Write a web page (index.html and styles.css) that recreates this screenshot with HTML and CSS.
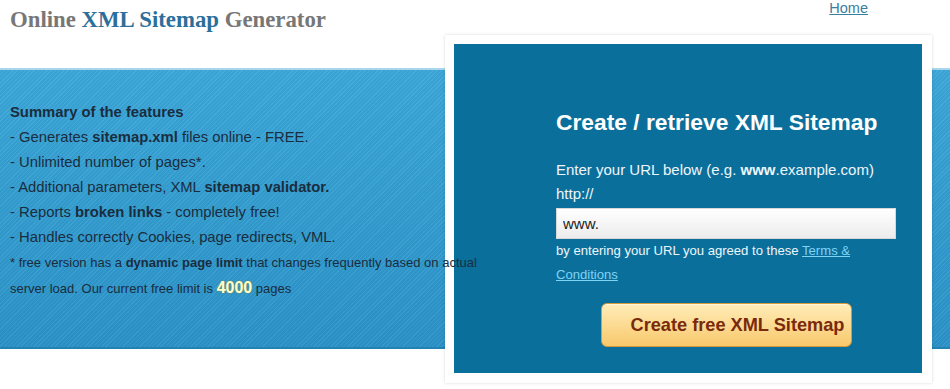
FILE: index.html
```html
<!DOCTYPE html>
<html lang="en">
<head>
    <meta charset="UTF-8">
    <meta name="viewport" content="width=device-width, initial-scale=1.0">
    <title>Online XML Sitemap Generator</title>
    <link rel="stylesheet" href="styles.css">
</head>
<body>
    <div class="header">
        <div class="logo">Online <span class="blue">XML Sitemap</span> Generator</div>
        <a class="home-link" href="#">Home</a>
    </div>
    <div class="band">
        <div class="features">
            <div class="line"><b>Summary of the features</b></div>
            <div class="line">- Generates <b>sitemap.xml</b> files online - FREE.</div>
            <div class="line">- Unlimited number of pages*.</div>
            <div class="line">- Additional parameters, XML <b>sitemap validator.</b></div>
            <div class="line">- Reports <b>broken links</b> - completely free!</div>
            <div class="line">- Handles correctly Cookies, page redirects, VML.</div>
            <div class="note">* free version has a <b>dynamic page limit</b> that changes frequently based on actual server load. Our current free limit is <span class="limit">4000</span> pages</div>
        </div>
        <div class="card">
            <div class="card-inner">
                <h2>Create / retrieve XML Sitemap</h2>
                <div class="line">Enter your URL below (e.g. <b>www</b>.example.com)</div>
                <div class="line">http://</div>
                <input type="text" id="url" value="www.">
                <div class="terms">by entering your URL you agreed to these <a href="#">Terms &amp; Conditions</a></div>
                <div class="btn-row">
                    <button id="start-button">Create free XML Sitemap</button>
                </div>
            </div>
        </div>
    </div>
</body>
</html>
```

FILE: styles.css
```css
body {
    margin: 0;
    min-height: 389px;
    font-family: "Liberation Sans", Arial, sans-serif;
    background: #fff;
}
.header {
    height: 68px;
    display: flex;
    justify-content: space-between;
    align-items: flex-start;
}
.logo {
    font-family: "Liberation Serif", "Times New Roman", serif;
    font-weight: bold;
    font-size: 22.8px;
    color: #777;
    padding: 7px 0 0 10px;
}
.logo .blue {
    color: #2c6f9a;
}
.home-link {
    font-size: 14.5px;
    line-height: 16px;
    color: #3a7ea3;
    margin: 0 82px 0 0;
}
.band {
    display: flex;
    align-items: flex-start;
    height: 281px;
    border-top: 2px solid #a9d6ec;
    box-sizing: border-box;
    background:
        repeating-linear-gradient(135deg, rgba(255,255,255,0.05) 0 1px, rgba(0,0,0,0.03) 1px 3px),
        linear-gradient(#3ca8da, #2b93c8);
    border-bottom: 2px solid #2282b4;
}
.features {
    flex: 0 0 445px;
    min-width: 0;
    position: relative;
    z-index: 1;
    padding: 30px 0 0 10px;
    box-sizing: border-box;
    font-size: 14.8px;
    color: #1a2d3e;
}
.features .line {
    line-height: 25px;
    white-space: nowrap;
}
.note {
    width: 480px;
    font-size: 13px;
    line-height: 25px;
}
.limit {
    color: #ffffc8;
    font-weight: bold;
    font-size: 16px;
    text-shadow: 0 0 2px #8a8a40;
}
.card {
    flex: 0 0 487px;
    height: 348px;
    margin-top: -35px;
    border: 9px solid #fff;
    border-right-width: 10px;
    border-bottom-width: 10px;
    box-sizing: border-box;
    box-shadow: 0 0 3px rgba(0,0,0,0.15);
    background: #0b6f9c;
}
.card-inner {
    padding: 64px 26px 0 102px;
    color: #eef6fb;
    font-size: 15px;
}
.card-inner h2 {
    margin: 0 0 22px;
    font-size: 22.8px;
    line-height: 28px;
    color: #fff;
}
.card-inner .line {
    line-height: 24px;
}
#url {
    display: block;
    width: 100%;
    height: 31px;
    margin: 2px 0 0;
    box-sizing: border-box;
    border: 1px solid #d8d8d8;
    background: linear-gradient(#fff, #ececec);
    padding: 0 6px;
    font-family: "Liberation Sans", Arial, sans-serif;
    font-size: 15px;
    color: #222;
}
.terms {
    font-size: 13.1px;
    line-height: 24px;
}
.terms a {
    color: #7fd3f5;
}
.btn-row {
    display: flex;
    justify-content: center;
    margin-top: 16px;
}
#start-button {
    width: 251px;
    height: 44px;
    padding: 0 4px 0 29px;
    text-align: left;
    white-space: nowrap;
    font-family: "Liberation Sans", Arial, sans-serif;
    font-weight: bold;
    font-size: 18.2px;
    color: #7a2a0c;
    border: 1px solid #d49a3c;
    border-radius: 6px;
    background: linear-gradient(#ffedb8, #f8c86c);
    box-shadow: inset 0 1px 0 #fff6dc;
}
```
